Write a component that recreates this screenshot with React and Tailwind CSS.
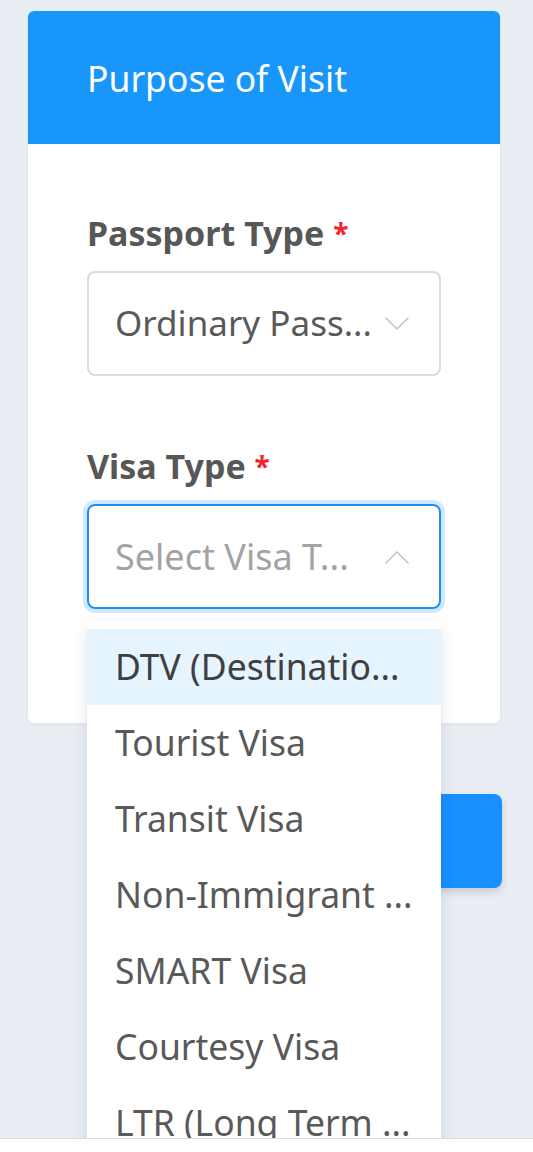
import React from "react";

const options = [
  "DTV (Destinatio...",
  "Tourist Visa",
  "Transit Visa",
  "Non-Immigrant ...",
  "SMART Visa",
  "Courtesy Visa",
  "LTR (Long Term ...",
];

const Chevron = ({ up }) => (
  <svg width="24" height="14" viewBox="0 0 24 14" fill="none" className="shrink-0">
    <path
      d={up ? "M1 13 L12 2 L23 13" : "M1 1 L12 12 L23 1"}
      stroke="#c4c4c4"
      strokeWidth="1.6"
      strokeLinecap="round"
      strokeLinejoin="round"
    />
  </svg>
);

const App = () => {
  return (
    <div
      className="h-[1152px] w-full bg-[#e9eef5] pt-[11px] relative overflow-hidden"
      style={{ fontFamily: '"Noto Sans", sans-serif' }}
    >
      <div className="ml-[28px] w-[472px] bg-white rounded-[6px] shadow-[0_1px_4px_rgba(0,0,0,0.06)]">
        <div className="h-[133px] bg-[#1996fa] rounded-t-[6px] px-[59px] flex items-center">
          <h2 className="text-white text-[35.5px] leading-none pt-[2px]">Purpose of Visit</h2>
        </div>

        <div className="px-[59px] pt-[69px] pb-[114px]">
          <label className="block text-[34px] leading-[40px] font-bold text-[#575757]">
            Passport Type <span className="text-[#f5222d] text-[28px] align-top">*</span>
          </label>
          <div className="mt-[18px] h-[105px] rounded-[8px] border-2 border-[#dcdcdc] flex items-center justify-between pl-[26px] pr-[30px]">
            <span className="text-[35px] text-[#595959] whitespace-nowrap">Ordinary Pass...</span>
            <Chevron />
          </div>

          <label className="block mt-[70px] text-[34px] leading-[40px] font-bold text-[#575757]">
            Visa Type <span className="text-[#f5222d] text-[28px] align-top">*</span>
          </label>
          <div className="relative mt-[18px]">
            <div className="h-[105px] rounded-[8px] border-2 border-[#1d8ff0] shadow-[0_0_0_4px_rgba(24,144,255,0.2)] flex items-center justify-between pl-[26px] pr-[30px]">
              <span className="text-[36px] text-[#a3a3a3] whitespace-nowrap">Select Visa T...</span>
              <Chevron up />
            </div>

            <ul className="absolute left-0 right-0 top-[117px] z-20 bg-white rounded-[8px] py-[8px] shadow-[0_6px_16px_rgba(0,0,0,0.1),0_3px_6px_-4px_rgba(0,0,0,0.12)]">
              {options.map((o, i) => (
                <li
                  key={o}
                  className={
                    "h-[76px] flex items-center px-[28px] text-[35.5px] whitespace-nowrap overflow-hidden " +
                    (i === 0 ? "bg-[#e6f4ff] text-[#3f3f3f]" : "text-[#595959]")
                  }
                >
                  {o}
                </li>
              ))}
            </ul>
          </div>
        </div>
      </div>

      <div className="mt-[71px] ml-auto mr-[31px] w-[300px] h-[94px] rounded-[8px] bg-[#1890ff] shadow-[0_4px_8px_rgba(0,0,0,0.15)]"></div>

      <div className="absolute left-0 right-0 bottom-0 h-[14px] bg-white border-t border-[#dcdcdc] z-30"></div>
    </div>
  );
};

export default App;
